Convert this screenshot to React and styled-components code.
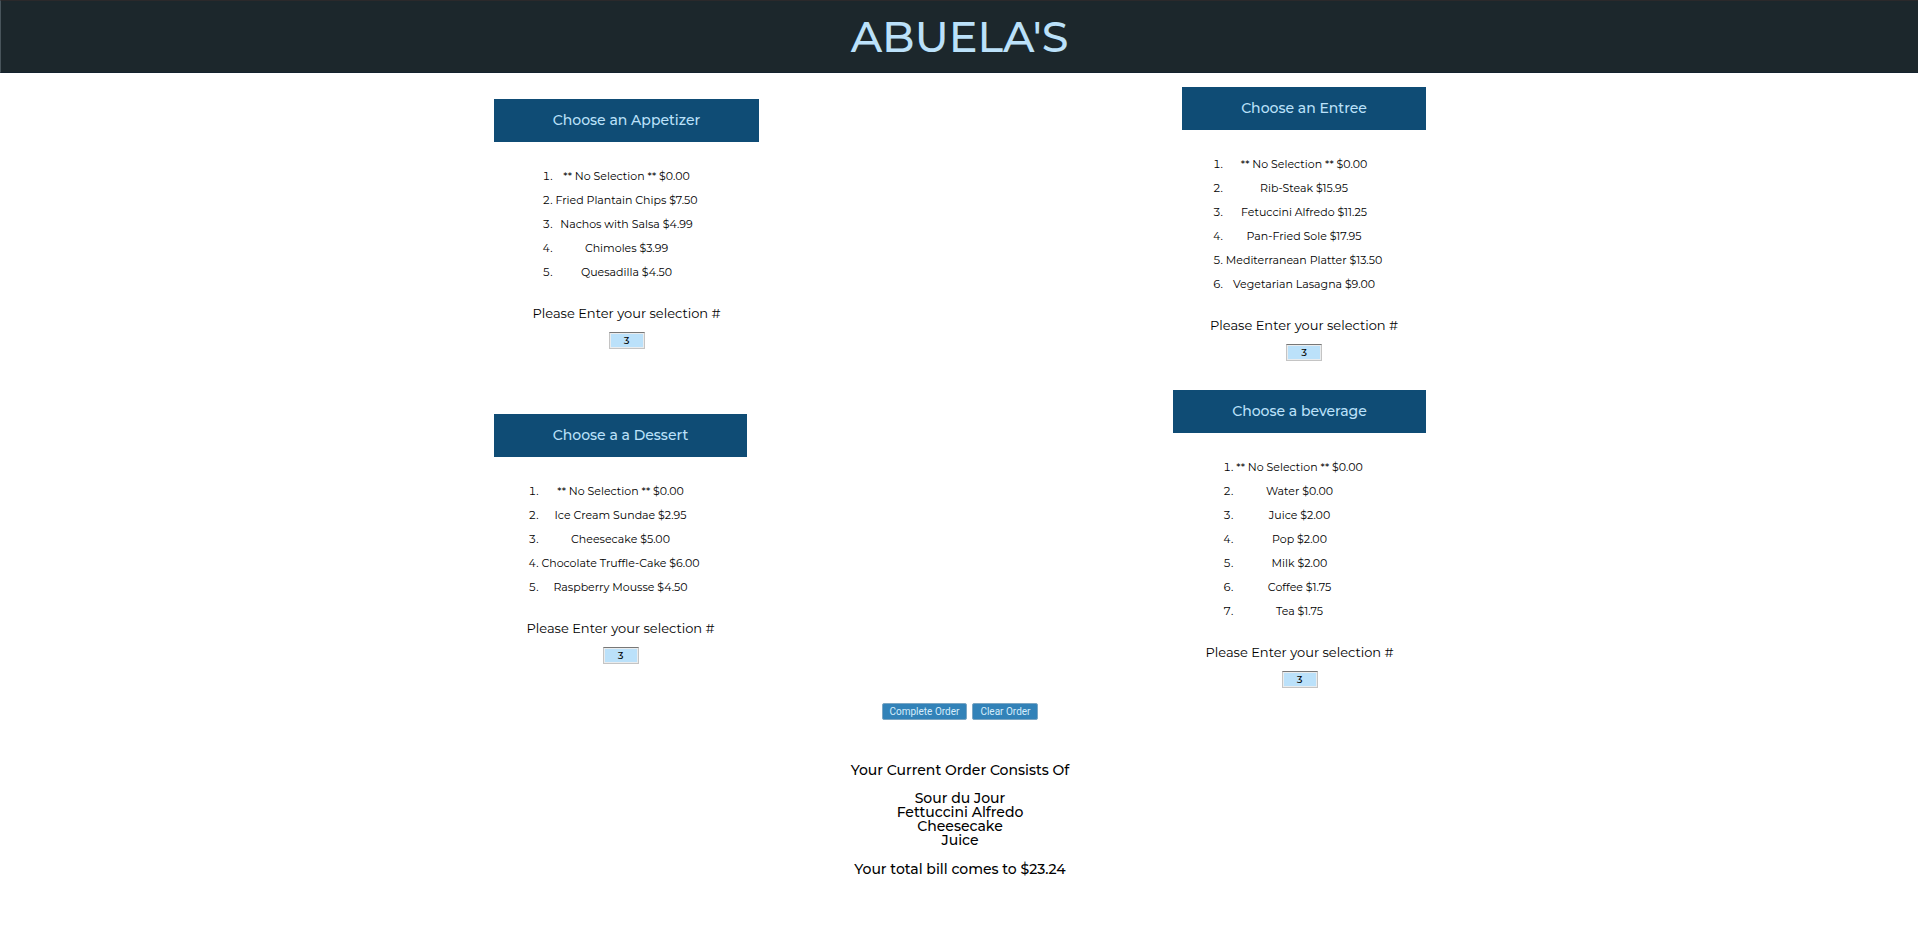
import React, { useState } from "react";
import styled, { createGlobalStyle } from "styled-components";

const GlobalStyle = createGlobalStyle`
  *, *::before, *::after { box-sizing: border-box; }
  body {
    margin: 0;
    background: #fff;
    color: #000;
    font-family: Montserrat, Inter, sans-serif;
  }
`;

const Banner = styled.header`
  display: flex;
  align-items: center;
  justify-content: center;
  height: 73px;
  border-top: 1px solid #2b292b;
  border-left: 1px solid #48545b;
  border-bottom: 1px solid #14222e;
  background: #1c272c;
`;

const Title = styled.h1`
  margin: 0;
  color: #bbe1fa;
  font-size: 43px;
  font-weight: 500;
  line-height: 48px;
`;

const Menu = styled.main`
  width: 934px;
  max-width: 100%;
  margin: 0 auto;
  padding: 14px 0 0 2px;
`;

const CourseRow = styled.div`
  display: flex;
  align-items: center;
  justify-content: space-between;
  margin-bottom: 29px;
`;

const Course = styled.section`
  display: flex;
  flex-direction: column;
  align-items: center;
  min-width: ${(p) => p.$width}px;
`;

const CourseTitle = styled.h2`
  align-self: stretch;
  margin: 0;
  background: #0f4c75;
  color: #bbe1fa;
  font-size: 14px;
  font-weight: 500;
  line-height: 43px;
  text-align: center;
`;

const Dishes = styled.ol`
  margin: 22px 0 21px;
  padding: 0;
  font-size: 11px;
  line-height: 24px;
  text-align: center;
`;

const Prompt = styled.label`
  margin-bottom: 11px;
  font-size: 13px;
  line-height: 16px;
`;

const Choice = styled.input`
  width: 36px;
  height: 17px;
  padding: 0;
  border: 1px solid #c4c4c4;
  border-top-color: #777;
  background: #bbe1fa;
  box-shadow: inset 0 0 0 1px #e9ecee;
  color: #000;
  font-family: inherit;
  font-size: 10px;
  font-weight: 500;
  line-height: 15px;
  text-align: center;
`;

const Actions = styled.div`
  display: flex;
  justify-content: center;
  gap: 5px;
  margin-top: -14px;
`;

const Button = styled.button`
  height: 17px;
  padding: 0 7px;
  border: 1px solid #7ba6c4;
  border-radius: 2px;
  background: #3282b8;
  color: #d5edfc;
  font-family: Roboto, sans-serif;
  font-size: 10px;
  line-height: 15px;
`;

const Summary = styled.section`
  padding-top: 43px;
  font-size: 14px;
  font-weight: 500;
  line-height: 14px;
  text-align: center;
`;

const Line = styled.p`
  margin: 0;
`;

const Picked = styled.ul`
  margin: 14px 0 15px;
  padding: 0;
  list-style: none;
`;

const courseRows = [
  [
    {
      id: "appetizer",
      title: "Choose an Appetizer",
      width: 265,
      dishes: [
        "** No Selection ** $0.00",
        "Fried Plantain Chips $7.50",
        "Nachos with Salsa $4.99",
        "Chimoles $3.99",
        "Quesadilla $4.50",
      ],
    },
    {
      id: "entree",
      title: "Choose an Entree",
      width: 244,
      dishes: [
        "** No Selection ** $0.00",
        "Rib-Steak $15.95",
        "Fetuccini Alfredo $11.25",
        "Pan-Fried Sole $17.95",
        "Mediterranean Platter $13.50",
        "Vegetarian Lasagna $9.00",
      ],
    },
  ],
  [
    {
      id: "dessert",
      title: "Choose a a Dessert",
      width: 253,
      dishes: [
        "** No Selection ** $0.00",
        "Ice Cream Sundae $2.95",
        "Cheesecake $5.00",
        "Chocolate Truffle-Cake $6.00",
        "Raspberry Mousse $4.50",
      ],
    },
    {
      id: "beverage",
      title: "Choose a beverage",
      width: 253,
      dishes: [
        "** No Selection ** $0.00",
        "Water $0.00",
        "Juice $2.00",
        "Pop $2.00",
        "Milk $2.00",
        "Coffee $1.75",
        "Tea $1.75",
      ],
    },
  ],
];

const order = ["Sour du Jour", "Fettuccini Alfredo", "Cheesecake", "Juice"];

function CourseCard({ course }) {
  const [value, setValue] = useState("3");
  return (
    <Course $width={course.width}>
      <CourseTitle>{course.title}</CourseTitle>
      <Dishes>
        {course.dishes.map((dish) => (
          <li key={dish}>{dish}</li>
        ))}
      </Dishes>
      <Prompt htmlFor={course.id}>Please Enter your selection #</Prompt>
      <Choice id={course.id} value={value} onChange={(e) => setValue(e.target.value)} />
    </Course>
  );
}

export default function App() {
  return (
    <>
      <GlobalStyle />
      <Banner>
        <Title>ABUELA'S</Title>
      </Banner>
      <Menu>
        {courseRows.map((row, i) => (
          <CourseRow key={i}>
            {row.map((course) => (
              <CourseCard key={course.id} course={course} />
            ))}
          </CourseRow>
        ))}
        <Actions>
          <Button type="button">Complete Order</Button>
          <Button type="button">Clear Order</Button>
        </Actions>
        <Summary>
          <Line>Your Current Order Consists Of</Line>
          <Picked>
            {order.map((item) => (
              <li key={item}>{item}</li>
            ))}
          </Picked>
          <Line>Your total bill comes to $23.24</Line>
        </Summary>
      </Menu>
    </>
  );
}
